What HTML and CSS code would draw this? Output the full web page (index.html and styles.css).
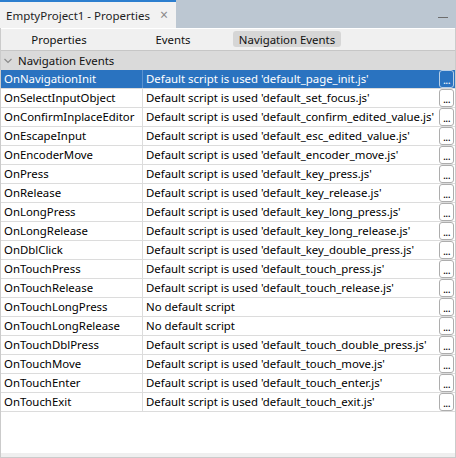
FILE: index.html
```html
<!DOCTYPE html>
<html>
<head>
<meta charset="utf-8">
<link rel="stylesheet" href="styles.css">
</head>
<body>
<div class="window">
  <div class="titlebar">
    <div class="doctab">
      <span class="doctab-title">EmptyProject1 - Properties</span>
      <span class="doctab-close">×</span>
    </div>
    <div class="minimize"></div>
  </div>
  <div class="panel">
    <div class="toolbar">
      <div class="tbtn">Properties</div>
      <div class="tbtn">Events</div>
      <div class="tbtn active">Navigation Events</div>
    </div>
    <div class="group">
      <svg class="chev" width="8" height="6" viewBox="0 0 8 6"><path d="M0.5 1 L4 4.5 L7.5 1" fill="none" stroke="#8a8a8a" stroke-width="1.2"/></svg>
      <span>Navigation Events</span>
    </div>
    <div class="grid">
      <div class="row selected"><div class="name">OnNavigationInit</div><div class="val">Default script is used 'default_page_init.js'</div><div class="btn">...</div></div>
      <div class="row"><div class="name">OnSelectInputObject</div><div class="val">Default script is used 'default_set_focus.js'</div><div class="btn">...</div></div>
      <div class="row"><div class="name">OnConfirmInplaceEditor</div><div class="val">Default script is used 'default_confirm_edited_value.js'</div><div class="btn">...</div></div>
      <div class="row"><div class="name">OnEscapeInput</div><div class="val">Default script is used 'default_esc_edited_value.js'</div><div class="btn">...</div></div>
      <div class="row"><div class="name">OnEncoderMove</div><div class="val">Default script is used 'default_encoder_move.js'</div><div class="btn">...</div></div>
      <div class="row"><div class="name">OnPress</div><div class="val">Default script is used 'default_key_press.js'</div><div class="btn">...</div></div>
      <div class="row"><div class="name">OnRelease</div><div class="val">Default script is used 'default_key_release.js'</div><div class="btn">...</div></div>
      <div class="row"><div class="name">OnLongPress</div><div class="val">Default script is used 'default_key_long_press.js'</div><div class="btn">...</div></div>
      <div class="row"><div class="name">OnLongRelease</div><div class="val">Default script is used 'default_key_long_release.js'</div><div class="btn">...</div></div>
      <div class="row"><div class="name">OnDblClick</div><div class="val">Default script is used 'default_key_double_press.js'</div><div class="btn">...</div></div>
      <div class="row"><div class="name">OnTouchPress</div><div class="val">Default script is used 'default_touch_press.js'</div><div class="btn">...</div></div>
      <div class="row"><div class="name">OnTouchRelease</div><div class="val">Default script is used 'default_touch_release.js'</div><div class="btn">...</div></div>
      <div class="row"><div class="name">OnTouchLongPress</div><div class="val">No default script</div><div class="btn">...</div></div>
      <div class="row"><div class="name">OnTouchLongRelease</div><div class="val">No default script</div><div class="btn">...</div></div>
      <div class="row"><div class="name">OnTouchDblPress</div><div class="val">Default script is used 'default_touch_double_press.js'</div><div class="btn">...</div></div>
      <div class="row"><div class="name">OnTouchMove</div><div class="val">Default script is used 'default_touch_move.js'</div><div class="btn">...</div></div>
      <div class="row"><div class="name">OnTouchEnter</div><div class="val">Default script is used 'default_touch_enter.js'</div><div class="btn">...</div></div>
      <div class="row"><div class="name">OnTouchExit</div><div class="val">Default script is used 'default_touch_exit.js'</div><div class="btn">...</div></div>
    </div>
    <div class="filler"></div>
    <div class="strip"></div>
  </div>
</div>
</body>
</html>
```
FILE: styles.css
```css
* { box-sizing: border-box; }
html, body { margin: 0; padding: 0; }
body {
  width: 456px;
  height: 458px;
  overflow: hidden;
  font-family: "Noto Sans", "Open Sans", sans-serif;
  font-size: 11.4px;
  color: #000;
  background: #fff;
}
.window {
  display: flex;
  flex-direction: column;
  height: 458px;
}
.titlebar {
  height: 28px;
  background: #bcc7d2;
  display: flex;
  justify-content: space-between;
  align-items: stretch;
  flex-shrink: 0;
}
.doctab {
  width: 176px;
  background: #f2f2f2;
  border-top: 2px solid #2d7fcf;
  display: flex;
  align-items: center;
  justify-content: space-between;
  padding: 0 8px 0 6px;
  color: #1e1e1e;
  white-space: nowrap;
}
.doctab-title { font-size: 11.5px; }
.doctab-close { color: #8a8a8a; font-size: 14px; line-height: 1; }
.minimize {
  width: 10px;
  height: 1px;
  background: #6d6d6d;
  margin: 17px 8px 0 0;
}
.panel {
  flex: 1;
  display: flex;
  flex-direction: column;
  border: 1px solid #cbcbcb;
  border-top: none;
}
.toolbar {
  height: 23px;
  border-top: 1px solid #ffffff;
  border-bottom: 1px solid #c6c6c6;
  background: #f0f0f0;
  display: flex;
  padding-left: 1px;
  flex-shrink: 0;
}
.tbtn {
  width: 114px;
  display: flex;
  align-items: center;
  justify-content: center;
  color: #111;
  margin: 2px 0 3px;
  white-space: nowrap;
}
.tbtn.active {
  width: 108px;
  margin: 2px 3px 3px;
  background: #d6d6d6;
  border-radius: 3px;
}
.group {
  height: 19px;
  background: #dadada;
  display: flex;
  align-items: center;
  padding-left: 3px;
  gap: 6px;
  color: #111;
  flex-shrink: 0;
}
.chev { margin-top: 1px; }
.grid { display: flex; flex-direction: column; flex-shrink: 0; }
.row {
  height: 19px;
  display: flex;
  border-bottom: 1px solid #dcdcdc;
  background: #fff;
}
.name {
  width: 142px;
  flex-shrink: 0;
  padding-left: 3px;
  border-right: 1px solid #dcdcdc;
  line-height: 18px;
  white-space: nowrap;
  overflow: hidden;
}
.val {
  flex: 1;
  min-width: 0;
  padding-left: 3px;
  line-height: 18px;
  white-space: nowrap;
  overflow: hidden;
}
.btn {
  width: 15px;
  flex-shrink: 0;
  height: 18px;
  margin-right: 1px;
  border: 1px solid #adadad;
  border-radius: 3px;
  background: #fff;
  color: #000;
  font-size: 11px;
  line-height: 18px;
  text-align: center;
  letter-spacing: -0.6px;
  padding-right: 0;
  overflow: hidden;
  white-space: nowrap;
}
.row.selected { background: #2a73c0; color: #fff; }
.row.selected .name { border-right-color: #5b93d0; }
.row.selected .btn { background: #2a73c0; border-color: #b9cfe6; color: #fff; }
.filler { flex: 1; background: #fff; }
.strip { height: 4px; background: #efefef; flex-shrink: 0; }
```
